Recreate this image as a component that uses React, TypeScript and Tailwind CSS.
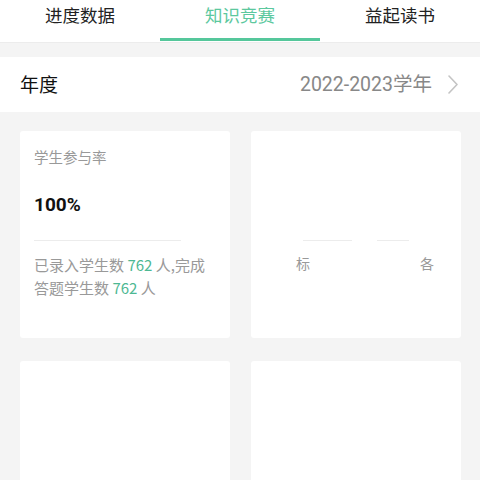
const tabs = ['进度数据', '知识竞赛', '益起读书'];

export default function App() {
  const active = 1;

  return (
    <div
      className="w-[480px] h-[480px] overflow-hidden bg-[#f4f4f4]"
      style={{ fontFamily: '"Noto Sans CJK SC", "Noto Sans", sans-serif' }}
    >
      <div className="flex h-[43px] bg-white border-b border-[#ececec]">
        {tabs.map((t, i) => (
          <div key={t} className="relative flex-1 flex justify-center">
            <span
              className={`mt-[3px] text-[17.5px] leading-[24px] ${
                i === active ? 'text-[#5cc89e]' : 'text-[#222]'
              }`}
            >
              {t}
            </span>
            {i === active && (
              <div className="absolute left-0 right-0 bottom-[1px] h-[3px] bg-[#55c79b]" />
            )}
          </div>
        ))}
      </div>

      <div className="mt-[14px] h-[55px] bg-white flex items-center justify-between pl-[20px] pr-[22px]">
        <span className="text-[19px] text-[#111]">年度</span>
        <div className="flex items-center gap-[16px]">
          <span
            className="text-[19.5px] text-[#888]"
            style={{ fontFamily: '"Roboto", "Noto Sans CJK SC", sans-serif' }}
          >
            2022-2023学年
          </span>
          <svg width="10" height="19" viewBox="0 0 10 19" fill="none">
            <path d="M1 1 L9 9.5 L1 18" stroke="#c4c4c4" strokeWidth="1.6" strokeLinecap="round" strokeLinejoin="round" />
          </svg>
        </div>
      </div>

      <div className="grid grid-cols-2 gap-x-[21px] gap-y-[23px] pl-[20px] pr-[19px] pt-[19px]">
        <div className="h-[207px] bg-white rounded-[3px] pl-[14px] pr-[6px] pt-[16px]">
          <div className="text-[14.5px] leading-[20px] text-[#999]">学生参与率</div>
          <div
            className="mt-[26px] text-[19px] font-bold text-[#111] leading-[24px]"
            style={{ fontFamily: '"Roboto", "Noto Sans CJK SC", sans-serif' }}
          >
            100%
          </div>
          <div className="mt-[23px] w-[147px] h-px bg-[#ececec]" />
          <div className="mt-[12px] text-[15px] leading-[23px] text-[#999] whitespace-nowrap">
            <div>
              已录入学生数 <span className="text-[#4db893]">762</span> 人,完成
            </div>
            <div>
              答题学生数 <span className="text-[#4db893]">762</span> 人
            </div>
          </div>
        </div>

        <div className="h-[207px] bg-white rounded-[3px] pt-[109px]">
          <div className="flex ml-[52px] gap-[25px]">
            <div className="w-[49px] h-px bg-[#ececec]" />
            <div className="w-[32px] h-px bg-[#ececec]" />
          </div>
          <div className="mt-[12px] flex justify-between pl-[45px] pr-[27px] text-[14px] text-[#999]">
            <span>标</span>
            <span>各</span>
          </div>
        </div>

        <div className="h-[140px] bg-white rounded-[3px]" />
        <div className="h-[140px] bg-white rounded-[3px]" />
      </div>
    </div>
  );
}
